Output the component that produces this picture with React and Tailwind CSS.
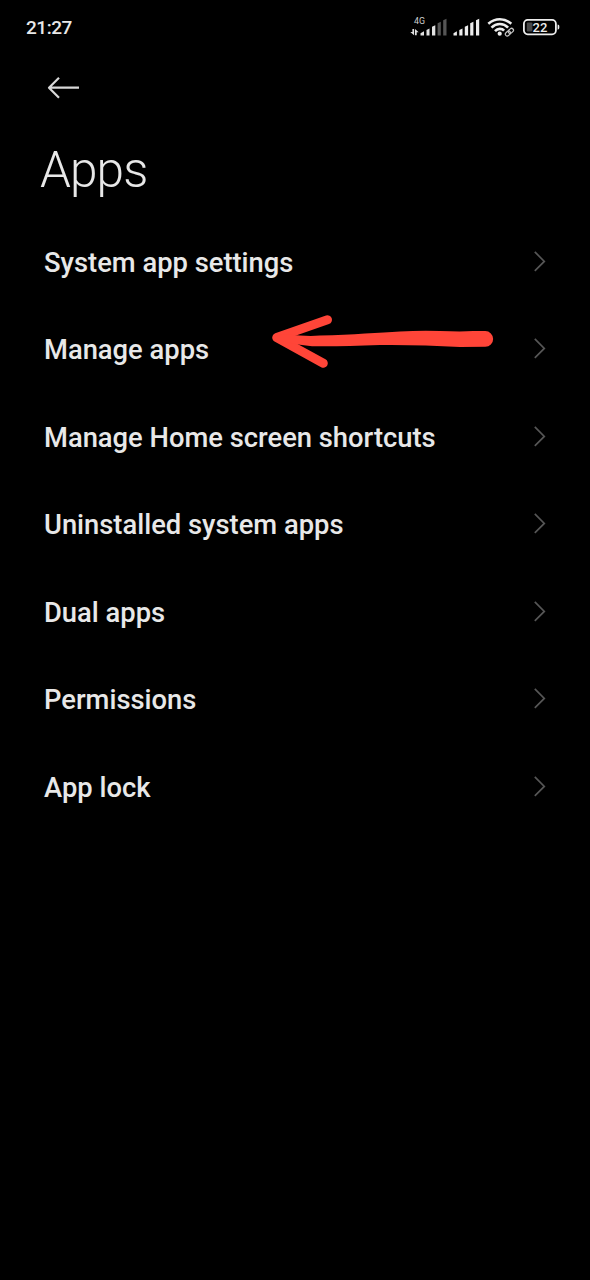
const items = [
  'System app settings',
  'Manage apps',
  'Manage Home screen shortcuts',
  'Uninstalled system apps',
  'Dual apps',
  'Permissions',
  'App lock',
];

function MobileSignal() {
  return (
    <svg width="38" height="22" viewBox="0 0 38 22" fill="#e2e2e2">
      <text x="4" y="9.3" fontSize="8.8" fill="#d0d0d0" fontFamily="Roboto, sans-serif">4G</text>
      <path d="M2.4 14.1h1.7v6.1L.3 17h2.1ZM5 20.2v-6.1l3.7 3.1H6.7v3Z" />
      <path d="M10.5 20.5v-2.2l3.5-2v4.2ZM16.5 20.5v-5.4l3-1.7v7.1ZM22 20.5v-8.7l3.3-1.6v10.3Z" />
      <path fill="#555" d="M27.6 20.5V8.3l3.2-1.6v13.8ZM33.2 20.5V5.3l3.3-1.5v16.7Z" />
    </svg>
  );
}

function SimSignal() {
  return (
    <svg width="28" height="22" viewBox="0 0 28 22" fill="#ededed">
      <path d="M.5 20.5v-2.2l3.4-2v4.2ZM6.3 20.5v-5.4l3.2-1.7v7.1ZM11.8 20.5v-8.7l3.3-1.6v10.3ZM17.2 20.5V8.3l3.2-1.6v13.8ZM23 20.5V5.3l3.2-1.5v16.7Z" />
    </svg>
  );
}

function Wifi() {
  return (
    <svg width="28" height="22" viewBox="0 0 28 22" fill="none" stroke="#ededed">
      <path strokeWidth="2.6" d="M1.3 8.7Q6.6 4.2 12.8 4.2T24.3 8.7M4.5 12.6q3.6-3.6 8.3-3.6t8.3 3.6M8 16.1q2-2.2 4.8-2.2t4.3 1.7" />
      <circle cx="12.7" cy="18.7" r="2.1" fill="#ededed" stroke="none" />
      <g stroke="#c4c4c4" strokeWidth="1.2" transform="rotate(-42 22.4 17.2)">
        <rect x="17.6" y="15.3" width="5.6" height="3.8" rx="1.9" />
        <rect x="21.6" y="15.3" width="5.6" height="3.8" rx="1.9" />
      </g>
    </svg>
  );
}

function Battery() {
  return (
    <svg width="38" height="22" viewBox="0 0 38 22">
      <rect x="1.9" y="4.9" width="32" height="14.4" rx="3.8" fill="none" stroke="#ededed" strokeWidth="1.8" />
      <rect x="4.8" y="7.6" width="5.6" height="9" rx="1" fill="#484848" />
      <path d="M35.6 9.5q1.7.3 1.7 1.6v2q0 1.3-1.7 1.6Z" fill="#ededed" />
      <text x="17.9" y="16.7" textAnchor="middle" fill="#ededed" fontSize="13" fontWeight="500" fontFamily="Roboto, sans-serif">22</text>
    </svg>
  );
}

function Chevron() {
  return (
    <svg width="14" height="22" viewBox="0 0 14 22" fill="none" stroke="#565656" strokeWidth="1.7">
      <path d="M1.8 .9 11.3 10.4 1.8 19.9" />
    </svg>
  );
}

function PointerArrow() {
  return (
    <svg className="absolute left-[270px] top-[312px]" width="226" height="60" viewBox="0 0 226 60" fill="none" stroke="#ff4538" strokeLinecap="round" strokeLinejoin="round">
      <path strokeWidth="9" d="M57.5 7.8 6.7 25.6 53.3 51.3" />
      <path fill="#ff4538" stroke="none" d="M8 22 30 23.5 Q40 24.2 50 23.6 Q100 21.5 130 19.4 Q150 18.5 170 19 Q190 19.7 203 19.1 L215.3 19.1 A7.8 7.8 0 0 1 215.3 34.8 L190 35 Q150 32.6 110 33 Q70 34.6 42 34.2 L28 32.5 8 28Z" />
    </svg>
  );
}

export default function App() {
  return (
    <main className="relative flex h-[1280px] w-[590px] flex-col overflow-hidden bg-black font-[Roboto,sans-serif] text-[#e8e8e8]">
      <header className="flex h-[52px] items-center justify-between pl-[26px]">
        <time className="mt-[3px] text-[19px] font-medium leading-none tracking-[-0.45px]">21:27</time>
        <div className="flex w-[180px] items-center">
          <MobileSignal />
          <div className="ml-[5px]"><SimSignal /></div>
          <div className="ml-[6px]"><Wifi /></div>
          <div className="ml-[7px]"><Battery /></div>
        </div>
      </header>
      <button aria-label="Back" className="ml-[46px] mt-[24px] h-[24px] w-[33px]">
        <svg width="33" height="24" viewBox="0 0 33 24" fill="none" stroke="#d8d8d8" strokeWidth="2.2" strokeLinejoin="round">
          <path d="M13 1.7 3 11.7 13 21.7M3 11.7h30" />
        </svg>
      </button>
      <h1 className="ml-[40px] mt-[40px] h-[60px] text-[49.5px] font-light leading-[60px] tracking-[-0.9px]">Apps</h1>
      <nav className="mt-[18px] flex flex-col">
        {items.map((item) => (
          <a key={item} className="flex h-[87.5px] items-center justify-between pl-[44px] pr-[43px]">
            <span className="pt-[2px] text-[27.35px] font-medium leading-8">{item}</span>
            <Chevron />
          </a>
        ))}
      </nav>
      <PointerArrow />
    </main>
  );
}
